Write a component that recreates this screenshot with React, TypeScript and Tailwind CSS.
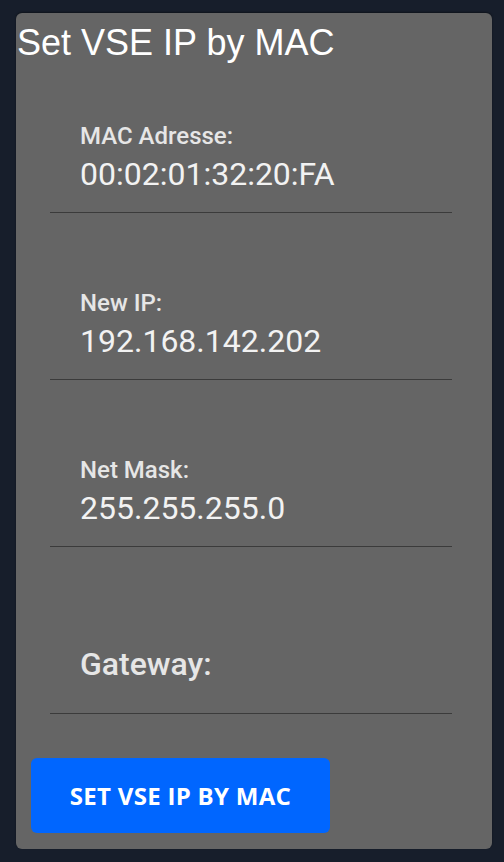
import React from "react";

interface Field {
  label: string;
  value: string;
}

const fields: Field[] = [
  { label: "MAC Adresse:", value: "00:02:01:32:20:FA" },
  { label: "New IP:", value: "192.168.142.202" },
  { label: "Net Mask:", value: "255.255.255.0" },
];

export default function App() {
  return (
    <div className="min-h-[862px] w-full bg-[#171e2b] pt-[13px] pl-[16px] pr-[12px] pb-[13px] font-['Roboto',sans-serif]">
      <div className="h-[836px] w-[476px] rounded-md bg-[#656565] shadow-[0_-1px_2px_rgba(0,0,0,0.4)] flex flex-col">
        <h1 className="text-[36px] leading-[35px] text-white pl-[1px] pt-[12px] font-['Liberation_Sans',sans-serif]">
          Set VSE IP by MAC
        </h1>
        <div className="ml-[34px] w-[402px] flex flex-col">
          {fields.map((f, i) => (
            <div
              key={f.label}
              className={
                (i === 0 ? "h-[153px]" : "h-[167px]") +
                " flex flex-col justify-end border-b border-[#3b3b3b]"
              }
            >
              <span className="pl-[30px] text-[24px] leading-none font-medium text-[#e6e6e6]">{f.label}</span>
              <span className="pl-[30px] pt-[10px] pb-[22px] text-[32px] leading-none text-[#f2f2f2]">
                {f.value}
              </span>
            </div>
          ))}
          <div className="h-[167px] flex flex-col justify-end border-b border-[#3b3b3b]">
            <span className="pl-[30px] pb-[33px] text-[32px] leading-none font-medium text-[#e6e6e6]">
              Gateway:
            </span>
          </div>
        </div>
        <button className="ml-[15px] mt-[44px] h-[75px] w-[299px] rounded-md bg-[#0066ff] text-white text-[24px] font-bold tracking-[0.3px] font-['Open_Sans',sans-serif]">
          SET VSE IP BY MAC
        </button>
      </div>
    </div>
  );
}
